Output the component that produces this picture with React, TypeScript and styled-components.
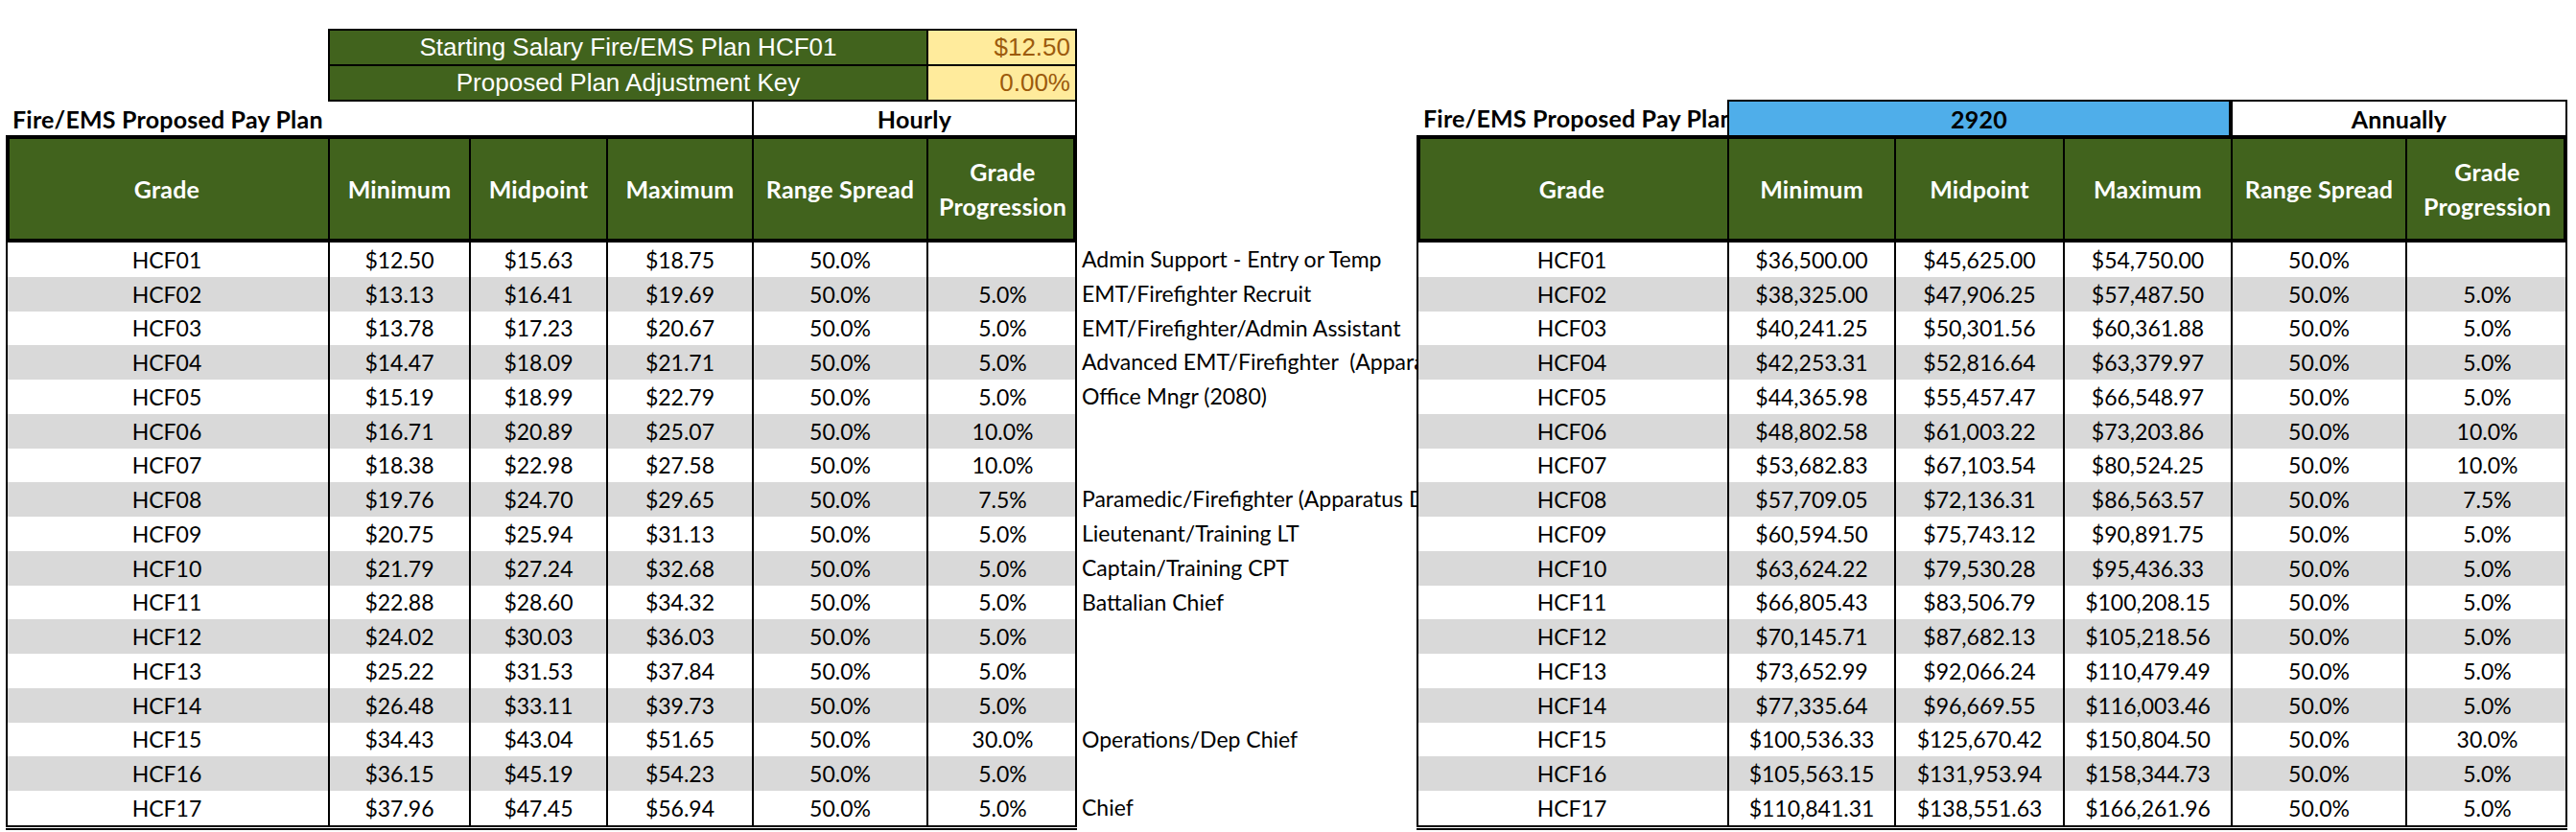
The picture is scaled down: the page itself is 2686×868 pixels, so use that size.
import React from "react";
import styled, { createGlobalStyle } from "styled-components";

const GREEN = "#41631d";
const BLUE = "#4faeea";
const STRIPE = "#d9d9d9";
const NEUTRAL_BG = "#ffeb9c";
const NEUTRAL_FG = "#9c5a0c";
const ROW_H = 35.75;

const GlobalStyle = createGlobalStyle`
  html, body {
    margin: 0;
    padding: 0;
    background: #ffffff;
  }
  body {
    font-family: Lato, "Open Sans", "Liberation Sans", sans-serif;
    color: #000;
  }
  * { box-sizing: border-box; }
`;

const Sheet = styled.div`
  display: flex;
  align-items: flex-start;
  width: 2686px;
  height: 868px;
  padding-left: 6px;
  overflow: hidden;
`;

const Block = styled.section<{ $top: number; $width: number }>`
  display: flex;
  flex-direction: column;
  flex: none;
  width: ${(p) => p.$width}px;
  padding-top: ${(p) => p.$top}px;
`;

const KeyBox = styled.div`
  display: grid;
  grid-template-columns: 622px 153px;
  grid-auto-rows: 35px;
  gap: 2px;
  padding: 2px;
  margin-left: 336px;
  width: 781px;
  background: #000;
`;

const KeyLabel = styled.div`
  display: flex;
  align-items: center;
  justify-content: center;
  background: ${GREEN};
  color: #fff;
  font-family: "Liberation Sans", Arial, sans-serif;
  font-size: 26px;
  white-space: nowrap;
`;

const KeyValue = styled.div`
  display: flex;
  align-items: center;
  justify-content: flex-end;
  padding-right: 5px;
  background: ${NEUTRAL_BG};
  color: ${NEUTRAL_FG};
  font-family: "Liberation Sans", Arial, sans-serif;
  font-size: 26px;
`;

const TitleRow = styled.div<{ $cols: string; $h: number }>`
  display: grid;
  grid-template-columns: ${(p) => p.$cols};
  height: ${(p) => p.$h}px;
`;

const TitleText = styled.div<{ $span: number }>`
  grid-column: span ${(p) => p.$span};
  display: flex;
  align-items: center;
  padding-left: 7px;
  font-size: 25px;
  font-weight: 700;
  letter-spacing: 0.2px;
  white-space: nowrap;
  overflow: hidden;
`;

const PeriodCell = styled.div<{ $span: number; $bg: string; $top?: boolean }>`
  grid-column: span ${(p) => p.$span};
  display: flex;
  align-items: center;
  justify-content: center;
  background: ${(p) => p.$bg};
  border-left: 2px solid #000;
  border-right: 2px solid #000;
  border-top: ${(p) => (p.$top ? "2px solid #000" : "none")};
  font-size: 25px;
  font-weight: 700;
  letter-spacing: 0.2px;
`;

const HeaderRow = styled.div<{ $cols: string }>`
  display: grid;
  grid-template-columns: ${(p) => p.$cols};
  height: 112px;
  background: ${GREEN};
  box-shadow: inset 0 0 0 4px #000;
`;

const HeaderCell = styled.div<{ $divider: boolean }>`
  display: flex;
  align-items: center;
  justify-content: center;
  text-align: center;
  color: #fff;
  font-size: 25px;
  font-weight: 700;
  letter-spacing: 0.2px;
  line-height: 36px;
  padding: 0 2px;
  white-space: nowrap;
  border-left: ${(p) => (p.$divider ? "2px solid #000" : "none")};
`;

const Body = styled.div`
  border-bottom: 5px double #000;
`;

const BodyRow = styled.div<{ $cols: string; $alt: boolean }>`
  display: grid;
  grid-template-columns: ${(p) => p.$cols};
  height: ${ROW_H}px;
  background: ${(p) => (p.$alt ? STRIPE : "#fff")};
  box-shadow: inset 2px 0 0 #000, inset -2px 0 0 #000;
`;

const BodyCell = styled.div<{ $divider: boolean }>`
  display: flex;
  align-items: center;
  justify-content: center;
  font-size: 23px;
  white-space: nowrap;
  border-left: ${(p) => (p.$divider ? "2px solid #000" : "none")};
`;

const Notes = styled.div`
  display: flex;
  flex-direction: column;
  flex: none;
  width: 354px;
  padding-top: 253px;
`;

const Note = styled.div`
  height: ${ROW_H}px;
  line-height: ${ROW_H}px;
  padding-left: 5px;
  font-size: 23px;
  white-space: pre;
  overflow: hidden;
`;

const LEFT_COLS = "336px 147px 143px 152px 182px 157px";
const RIGHT_COLS = "324px 174px 176px 175px 182px 169px";

const HEADERS = ["Grade", "Minimum", "Midpoint", "Maximum", "Range Spread", "Grade\nProgression"];

const hourly: string[][] = [
  ["HCF01", "$12.50", "$15.63", "$18.75", "50.0%", ""],
  ["HCF02", "$13.13", "$16.41", "$19.69", "50.0%", "5.0%"],
  ["HCF03", "$13.78", "$17.23", "$20.67", "50.0%", "5.0%"],
  ["HCF04", "$14.47", "$18.09", "$21.71", "50.0%", "5.0%"],
  ["HCF05", "$15.19", "$18.99", "$22.79", "50.0%", "5.0%"],
  ["HCF06", "$16.71", "$20.89", "$25.07", "50.0%", "10.0%"],
  ["HCF07", "$18.38", "$22.98", "$27.58", "50.0%", "10.0%"],
  ["HCF08", "$19.76", "$24.70", "$29.65", "50.0%", "7.5%"],
  ["HCF09", "$20.75", "$25.94", "$31.13", "50.0%", "5.0%"],
  ["HCF10", "$21.79", "$27.24", "$32.68", "50.0%", "5.0%"],
  ["HCF11", "$22.88", "$28.60", "$34.32", "50.0%", "5.0%"],
  ["HCF12", "$24.02", "$30.03", "$36.03", "50.0%", "5.0%"],
  ["HCF13", "$25.22", "$31.53", "$37.84", "50.0%", "5.0%"],
  ["HCF14", "$26.48", "$33.11", "$39.73", "50.0%", "5.0%"],
  ["HCF15", "$34.43", "$43.04", "$51.65", "50.0%", "30.0%"],
  ["HCF16", "$36.15", "$45.19", "$54.23", "50.0%", "5.0%"],
  ["HCF17", "$37.96", "$47.45", "$56.94", "50.0%", "5.0%"],
];

const annual: string[][] = [
  ["HCF01", "$36,500.00", "$45,625.00", "$54,750.00", "50.0%", ""],
  ["HCF02", "$38,325.00", "$47,906.25", "$57,487.50", "50.0%", "5.0%"],
  ["HCF03", "$40,241.25", "$50,301.56", "$60,361.88", "50.0%", "5.0%"],
  ["HCF04", "$42,253.31", "$52,816.64", "$63,379.97", "50.0%", "5.0%"],
  ["HCF05", "$44,365.98", "$55,457.47", "$66,548.97", "50.0%", "5.0%"],
  ["HCF06", "$48,802.58", "$61,003.22", "$73,203.86", "50.0%", "10.0%"],
  ["HCF07", "$53,682.83", "$67,103.54", "$80,524.25", "50.0%", "10.0%"],
  ["HCF08", "$57,709.05", "$72,136.31", "$86,563.57", "50.0%", "7.5%"],
  ["HCF09", "$60,594.50", "$75,743.12", "$90,891.75", "50.0%", "5.0%"],
  ["HCF10", "$63,624.22", "$79,530.28", "$95,436.33", "50.0%", "5.0%"],
  ["HCF11", "$66,805.43", "$83,506.79", "$100,208.15", "50.0%", "5.0%"],
  ["HCF12", "$70,145.71", "$87,682.13", "$105,218.56", "50.0%", "5.0%"],
  ["HCF13", "$73,652.99", "$92,066.24", "$110,479.49", "50.0%", "5.0%"],
  ["HCF14", "$77,335.64", "$96,669.55", "$116,003.46", "50.0%", "5.0%"],
  ["HCF15", "$100,536.33", "$125,670.42", "$150,804.50", "50.0%", "30.0%"],
  ["HCF16", "$105,563.15", "$131,953.94", "$158,344.73", "50.0%", "5.0%"],
  ["HCF17", "$110,841.31", "$138,551.63", "$166,261.96", "50.0%", "5.0%"],
];

const notes = [
  "Admin Support - Entry or Temp",
  "EMT/Firefighter Recruit",
  "EMT/Firefighter/Admin Assistant",
  "Advanced EMT/Firefighter  (Apparatus Driver)",
  "Office Mngr (2080)",
  "",
  "",
  "Paramedic/Firefighter (Apparatus Driver)",
  "Lieutenant/Training LT",
  "Captain/Training CPT",
  "Battalian Chief",
  "",
  "",
  "",
  "Operations/Dep Chief",
  "",
  "Chief",
];

function PayTable({ cols, rows }: { cols: string; rows: string[][] }) {
  return (
    <>
      <HeaderRow $cols={cols}>
        {HEADERS.map((h, i) => (
          <HeaderCell key={h} $divider={i > 0}>
            {h.split("\n").map((line, j) => (
              <React.Fragment key={j}>
                {j > 0 && <br />}
                {line}
              </React.Fragment>
            ))}
          </HeaderCell>
        ))}
      </HeaderRow>
      <Body>
        {rows.map((r, i) => (
          <BodyRow key={r[0]} $cols={cols} $alt={i % 2 === 1}>
            {r.map((c, j) => (
              <BodyCell key={j} $divider={j > 0}>
                {c}
              </BodyCell>
            ))}
          </BodyRow>
        ))}
      </Body>
    </>
  );
}

export default function App() {
  return (
    <>
      <GlobalStyle />
      <Sheet>
        <Block $top={30} $width={1117}>
          <KeyBox>
            <KeyLabel>Starting Salary Fire/EMS Plan HCF01</KeyLabel>
            <KeyValue>$12.50</KeyValue>
            <KeyLabel>Proposed Plan Adjustment Key</KeyLabel>
            <KeyValue>0.00%</KeyValue>
          </KeyBox>
          <TitleRow $cols={LEFT_COLS} $h={35}>
            <TitleText $span={4}>Fire/EMS Proposed Pay Plan</TitleText>
            <PeriodCell $span={2} $bg="#fff">
              Hourly
            </PeriodCell>
          </TitleRow>
          <PayTable cols={LEFT_COLS} rows={hourly} />
        </Block>
        <Notes>
          {notes.map((n, i) => (
            <Note key={i}>{n}</Note>
          ))}
        </Notes>
        <Block $top={104} $width={1200}>
          <TitleRow $cols={RIGHT_COLS} $h={37}>
            <TitleText $span={1}>Fire/EMS Proposed Pay Plan</TitleText>
            <PeriodCell $span={3} $bg={BLUE} $top>
              2920
            </PeriodCell>
            <PeriodCell $span={2} $bg="#fff" $top>
              Annually
            </PeriodCell>
          </TitleRow>
          <PayTable cols={RIGHT_COLS} rows={annual} />
        </Block>
      </Sheet>
    </>
  );
}
